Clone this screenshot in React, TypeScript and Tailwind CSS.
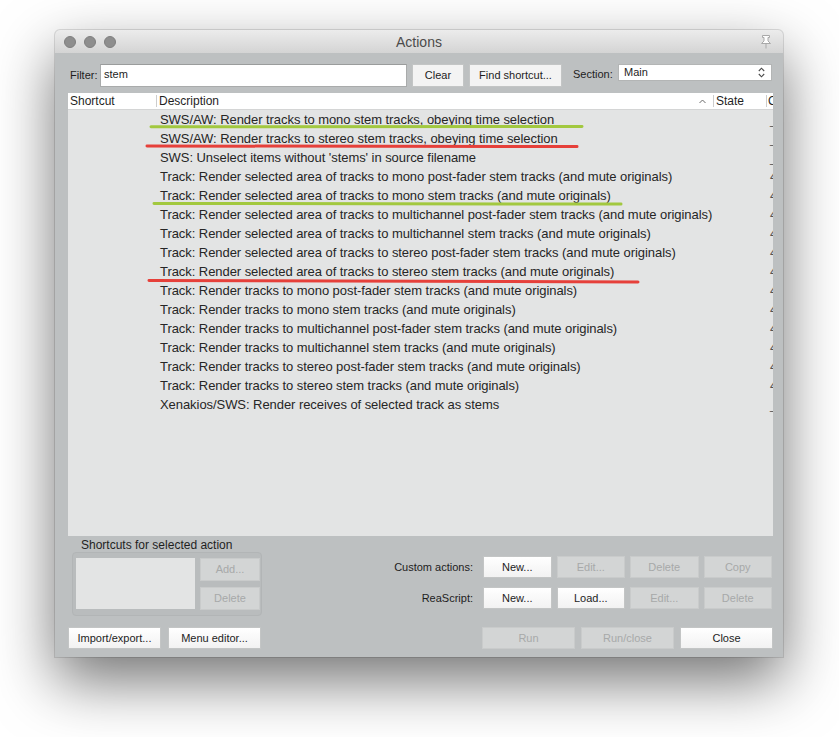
import React from "react"

type Row = { desc: string; id: string }

const rows: Row[] = [
    { desc: "SWS/AW: Render tracks to mono stem tracks, obeying time selection", id: "_AWRENDERMONOSMART" },
    { desc: "SWS/AW: Render tracks to stereo stem tracks, obeying time selection", id: "_AWRENDERSTEREOSMART" },
    { desc: "SWS: Unselect items without 'stems' in source filename", id: "_SWS_UNSELNOSTEMS" },
    { desc: "Track: Render selected area of tracks to mono post-fader stem tracks (and mute originals)", id: "41721" },
    { desc: "Track: Render selected area of tracks to mono stem tracks (and mute originals)", id: "41718" },
    { desc: "Track: Render selected area of tracks to multichannel post-fader stem tracks (and mute originals)", id: "41722" },
    { desc: "Track: Render selected area of tracks to multichannel stem tracks (and mute originals)", id: "41719" },
    { desc: "Track: Render selected area of tracks to stereo post-fader stem tracks (and mute originals)", id: "41720" },
    { desc: "Track: Render selected area of tracks to stereo stem tracks (and mute originals)", id: "41716" },
    { desc: "Track: Render tracks to mono post-fader stem tracks (and mute originals)", id: "40789" },
    { desc: "Track: Render tracks to mono stem tracks (and mute originals)", id: "40537" },
    { desc: "Track: Render tracks to multichannel post-fader stem tracks (and mute originals)", id: "40790" },
    { desc: "Track: Render tracks to multichannel stem tracks (and mute originals)", id: "40892" },
    { desc: "Track: Render tracks to stereo post-fader stem tracks (and mute originals)", id: "40788" },
    { desc: "Track: Render tracks to stereo stem tracks (and mute originals)", id: "40405" },
    { desc: "Xenakios/SWS: Render receives of selected track as stems", id: "_XENAKIOS_RENDERRECEIVESASSTEMS" },
]

function Btn({ label, disabled = false, className = "" }: { label: string; disabled?: boolean; className?: string }) {
    return (
        <div
            className={
                "flex items-center justify-center text-[11px] leading-none border " +
                (disabled
                    ? "bg-[#d3d5d5] border-[#c9cbcb] text-[#a7a9a9] "
                    : "bg-gradient-to-b from-white to-[#f2f2f2] border-[#c3c5c5] text-[#1d1d1d] ") +
                className
            }
        >
            {label}
        </div>
    )
}

function PinIcon() {
    return (
        <svg width="12" height="14" viewBox="0 0 12 14" fill="#fdfdfd" stroke="#a9a9a9" strokeWidth="1">
            <path d="M2.5 0.5 H9.5 V2.5 H8 V6 L10.5 8.5 H1.5 L4 6 V2.5 H2.5 Z" />
            <path d="M6 8.5 V13.5" fill="none" />
        </svg>
    )
}

function Divider() {
    return <span className="w-px h-[12px] bg-[#cdcdcd] shrink-0" />
}

export default function App() {
    return (
        <div className="w-[839px] h-[737px] bg-white overflow-hidden" style={{ fontFamily: '"Liberation Sans", Arial, sans-serif' }}>
            <div className="ml-[55px] mt-[30px] w-[728px] h-[627px] rounded-t-[5px] bg-[#bdc0c1] flex flex-col shadow-[0_24px_60px_rgba(0,0,0,0.55),0_0_0_1px_rgba(0,0,0,0.12)]">
                {/* title bar */}
                <div className="h-[23px] shrink-0 rounded-t-[5px] bg-gradient-to-b from-[#ececec] to-[#d4d4d4] grid grid-cols-[1fr_auto_1fr] items-center">
                    <div className="flex items-center gap-[8px] pl-[9px]">
                        <span className="w-[12px] h-[12px] rounded-full bg-[#8e8e8e] border border-[#7f7f7f]" />
                        <span className="w-[12px] h-[12px] rounded-full bg-[#8e8e8e] border border-[#7f7f7f]" />
                        <span className="w-[12px] h-[12px] rounded-full bg-[#8e8e8e] border border-[#7f7f7f]" />
                    </div>
                    <div className="text-[14px] text-[#4b4b4b] leading-none pt-[1px]">Actions</div>
                    <div className="flex justify-end pr-[11px]">
                        <PinIcon />
                    </div>
                </div>

                <div className="flex-1 flex flex-col pl-[13px] pr-[10px]">
                    {/* filter row */}
                    <div className="mt-[11px] h-[23px] flex items-start text-[11px] text-[#1d1d1d]">
                        <div className="ml-[2px] w-[30px] h-[23px] flex items-center">Filter:</div>
                        <div className="w-[307px] h-[23px] bg-white border border-[#a9abab] border-t-[#9a9c9c] pl-[3px] pt-[3px] leading-[13px]">stem</div>
                        <Btn label="Clear" className="ml-[5px] w-[52px] h-[23px] !bg-none !bg-[#f3f3f3]" />
                        <Btn label="Find shortcut..." className="ml-[5px] w-[93px] h-[23px] !bg-none !bg-[#f3f3f3]" />
                        <div className="ml-[11px] w-[45px] h-[20px] flex items-center">Section:</div>
                        <div className="w-[154px] h-[17px] bg-white border border-[#b3b5b5] flex items-center pl-[5px] pr-[6px] leading-none">
                            <span className="flex-1">Main</span>
                            <svg width="7" height="11" viewBox="0 0 7 11" fill="none" stroke="#4a4a4a" strokeWidth="1.1">
                                <path d="M0.8 4 L3.5 1.2 L6.2 4" />
                                <path d="M0.8 7 L3.5 9.8 L6.2 7" />
                            </svg>
                        </div>
                    </div>

                    {/* action list */}
                    <div className="relative mt-[6px] h-[443px] w-[705px] bg-[#e3e4e4] overflow-hidden">
                        <div className="h-[17px] bg-white border-b border-[#d4d5d5] flex items-center text-[12px] text-[#1f1f1f] whitespace-nowrap">
                            <div className="w-[88px] pl-[2px] shrink-0">Shortcut</div>
                            <Divider />
                            <div className="w-[556px] pl-[2px] pr-[7px] shrink-0 flex items-center">
                                <span className="flex-1">Description</span>
                                <svg width="7" height="5" viewBox="0 0 7 5" fill="none" stroke="#6a6a6a" strokeWidth="1">
                                    <path d="M0.5 4 L3.5 1 L6.5 4" />
                                </svg>
                            </div>
                            <Divider />
                            <div className="w-[52px] pl-[2px] shrink-0">State</div>
                            <Divider />
                            <div className="w-[6px] pl-[1px] shrink-0 overflow-hidden">C</div>
                        </div>
                        {rows.map((r, i) => (
                            <div key={i} className="h-[19px] flex items-center text-[13px] tracking-[-0.06px] text-[#262626] whitespace-nowrap">
                                <div className="w-[89px] shrink-0" />
                                <div className="w-[557px] pl-[3px] shrink-0">{r.desc}</div>
                                <div className="w-[53px] shrink-0" />
                                <div className="w-[6px] pl-[3px] shrink-0 overflow-hidden text-[#555]">{r.id}</div>
                            </div>
                        ))}
                        {/* hand-drawn marks under the stem actions */}
                        <svg className="absolute left-0 top-0 pointer-events-none" width="705" height="443">
                            <g strokeWidth="3" strokeLinecap="round" fill="none">
                                <path d="M83 33.8 L514 33.5" stroke="#a2c83f" />
                                <path d="M79 53 L509 53.5" stroke="#e6403a" />
                                <path d="M86 110.5 L553 111" stroke="#a2c83f" />
                                <path d="M81 187.5 L570 189" stroke="#e6403a" />
                            </g>
                        </svg>
                    </div>

                    {/* shortcuts + custom actions */}
                    <div className="h-[91px] flex">
                        <div className="w-[194px] shrink-0">
                            <div className="h-[16px] pt-[2px] pl-[13px] text-[12px] leading-[14px] text-[#1f1f1f]">Shortcuts for selected action</div>
                            <div className="ml-[4px] w-[190px] h-[64px] rounded-[4px] border border-[#b2b5b6] bg-[#b9bcbd] flex pl-[3px] pt-[5px]">
                                <div className="w-[119px] h-[51px] bg-[#e3e4e4]" />
                                <div className="ml-[5px] flex flex-col gap-[6px]">
                                    <Btn label="Add..." disabled className="w-[60px] h-[23px]" />
                                    <Btn label="Delete" disabled className="w-[60px] h-[23px]" />
                                </div>
                            </div>
                        </div>
                        <div className="ml-auto pt-[20px] pr-[1px] flex flex-col gap-[9px] text-[11px] text-[#1d1d1d]">
                            <div className="flex items-center">
                                <div className="w-[100px] mr-[10px] text-right">Custom actions:</div>
                                <div className="flex gap-[5px]">
                                    <Btn label="New..." className="w-[68.5px] h-[22px]" />
                                    <Btn label="Edit..." disabled className="w-[68.5px] h-[22px]" />
                                    <Btn label="Delete" disabled className="w-[68.5px] h-[22px]" />
                                    <Btn label="Copy" disabled className="w-[68.5px] h-[22px]" />
                                </div>
                            </div>
                            <div className="flex items-center">
                                <div className="w-[100px] mr-[10px] text-right">ReaScript:</div>
                                <div className="flex gap-[5px]">
                                    <Btn label="New..." className="w-[68.5px] h-[22px]" />
                                    <Btn label="Load..." className="w-[68.5px] h-[22px]" />
                                    <Btn label="Edit..." disabled className="w-[68.5px] h-[22px]" />
                                    <Btn label="Delete" disabled className="w-[68.5px] h-[22px]" />
                                </div>
                            </div>
                        </div>
                    </div>

                    {/* bottom buttons */}
                    <div className="h-[22px] flex justify-between">
                        <div className="flex gap-[7px]">
                            <Btn label="Import/export..." className="w-[93px] h-[22px]" />
                            <Btn label="Menu editor..." className="w-[93px] h-[22px]" />
                        </div>
                        <div className="flex gap-[6px]">
                            <Btn label="Run" disabled className="w-[93px] h-[22px]" />
                            <Btn label="Run/close" disabled className="w-[93px] h-[22px]" />
                            <Btn label="Close" className="w-[93px] h-[22px]" />
                        </div>
                    </div>
                </div>
            </div>
        </div>
    )
}
